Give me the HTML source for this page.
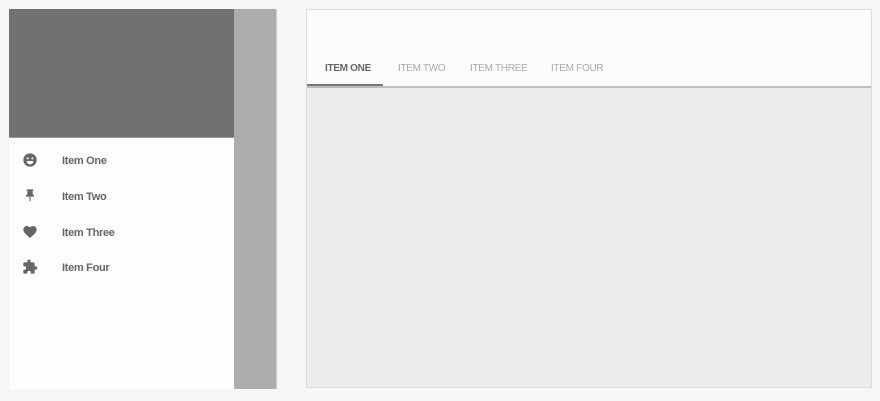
<!DOCTYPE html>
<html><head><style>
body{margin:0;width:880px;height:401px;background:#f6f6f6;font-family:"Liberation Sans",sans-serif;position:relative;overflow:hidden}
.lp{position:absolute;left:9px;top:9px;width:225px;height:380px;background:#fdfdfd}
.hd{position:absolute;left:9px;top:9px;width:225px;height:128px;background:#717171;border-bottom:1px solid #999}
.strip{position:absolute;left:234px;top:9px;width:42px;height:380px;background:#acacac;border-right:1px solid #ccc}
.it{position:absolute;left:62px;font-size:11px;font-weight:bold;color:#666;letter-spacing:-0.3px}
.ic{position:absolute;left:22px}
.rp{position:absolute;left:306px;top:9px;width:566px;height:379px;background:#ececec;border:1px solid #ddd;box-sizing:border-box}
.tb{position:absolute;left:307px;top:10px;width:564px;height:76px;background:#fcfcfc;border-bottom:2px solid #bdbdbd}
.t{position:absolute;top:63px;font-size:10px;color:#aaa;letter-spacing:-0.3px}
</style></head><body>
<div class="lp"></div><div class="hd"></div><div class="strip"></div>
<svg class="ic" style="top:152px" width="16" height="16" viewBox="0 0 24 24"><circle cx="12" cy="12" r="10" fill="#666"/><circle cx="8.5" cy="9.5" r="1.5" fill="#fff"/><circle cx="15.5" cy="9.5" r="1.5" fill="#fff"/><path d="M7 13.5h10a5 5 0 0 1-10 0z" fill="#fff"/></svg>
<div class="it" style="top:155px">Item One</div>
<svg class="ic" style="top:188px" width="16" height="16" viewBox="0 0 24 24"><path d="M16 9V4h1V2H7v2h1v5l-2 2v2h5.2v7h1.6v-7H18v-2z" fill="#666"/></svg>
<div class="it" style="top:191px">Item Two</div>
<svg class="ic" style="top:224px" width="16" height="16" viewBox="0 0 24 24"><path d="M12 21l-1.5-1.3C5.4 15.4 2 12.3 2 8.5 2 5.4 4.4 3 7.5 3c1.7 0 3.4.8 4.5 2.1C13.1 3.8 14.8 3 16.5 3 19.6 3 22 5.4 22 8.5c0 3.8-3.4 6.900-8.500 11.200z" fill="#666"/></svg>
<div class="it" style="top:227px">Item Three</div>
<svg class="ic" style="top:259px" width="16" height="16" viewBox="0 0 24 24"><path d="M20.5 11H19V7a2 2 0 0 0-2-2h-4V3.5a2.5 2.5 0 0 0-5 0V5H4a2 2 0 0 0-2 2v3.8h1.5a2.7 2.7 0 0 1 0 5.4H2V20a2 2 0 0 0 2 2h3.8v-1.5a2.7 2.7 0 0 1 5.4 0V22H17a2 2 0 0 0 2-2v-4h1.5a2.5 2.5 0 0 0 0-5z" fill="#666"/></svg>
<div class="it" style="top:262px">Item Four</div>
<div class="rp"></div><div class="tb"></div>
<div style="position:absolute;left:307px;top:84px;width:76px;height:2px;background:#777"></div>
<div class="t" style="left:325px;color:#666;font-weight:bold">ITEM ONE</div>
<div class="t" style="left:398px">ITEM TWO</div>
<div class="t" style="left:470px">ITEM THREE</div>
<div class="t" style="left:551px">ITEM FOUR</div>
</body></html>
